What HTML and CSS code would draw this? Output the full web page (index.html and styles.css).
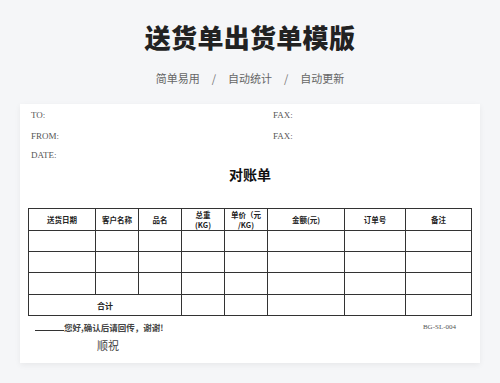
FILE: index.html
```html
<!DOCTYPE html>
<html lang="zh">
<head>
<meta charset="utf-8">
<link rel="stylesheet" href="styles.css">
</head>
<body>
<header class="hero">
  <h1 class="title">送货单出货单模版</h1>
  <p class="subtitle"><span>简单易用</span><span class="sep">/</span><span>自动统计</span><span class="sep">/</span><span>自动更新</span></p>
</header>
<main class="paper">
  <div class="meta">
    <div class="meta-row"><span>TO:</span><span>FAX:</span></div>
    <div class="meta-row"><span>FROM:</span><span>FAX:</span></div>
    <div class="meta-row"><span>DATE:</span><span></span></div>
  </div>
  <h2 class="doc-title">对账单</h2>
  <table class="grid">
    <colgroup>
      <col class="c1"><col class="c2"><col class="c3"><col class="c4"><col class="c5"><col class="c6"><col class="c7"><col class="c8">
    </colgroup>
    <thead>
      <tr class="head">
        <th>送货日期</th><th>客户名称</th><th>品名</th><th><span class="ln">总重</span><span class="ln">(KG)</span></th><th><span class="ln">单价（元</span><span class="ln">/KG)</span></th><th>金额(元)</th><th>订单号</th><th>备注</th>
      </tr>
    </thead>
    <tbody>
      <tr class="r1"><td></td><td></td><td></td><td></td><td></td><td></td><td></td><td></td></tr>
      <tr class="r2"><td></td><td></td><td></td><td></td><td></td><td></td><td></td><td></td></tr>
      <tr class="r3"><td></td><td></td><td></td><td></td><td></td><td></td><td></td><td></td></tr>
      <tr class="r4"><td colspan="3" class="sum">合计</td><td></td><td></td><td></td><td></td><td></td></tr>
    </tbody>
  </table>
  <div class="foot">
    <span class="note"><span class="blank"></span>您好,确认后请回传，谢谢!</span>
    <span class="code">BG-SL-004</span>
  </div>
  <div class="regards">顺祝</div>
</main>
</body>
</html>
```

FILE: styles.css
```css
* { box-sizing: border-box; }
html, body { margin: 0; padding: 0; }
body {
  width: 500px;
  height: 383px;
  background: #f5f6f8;
  overflow: hidden;
  font-family: "Liberation Serif", "Noto Sans CJK SC", serif;
}
.hero {
  text-align: center;
  padding-top: 23px;
}
.title {
  margin: 0;
  font-family: "Noto Sans CJK SC", sans-serif;
  font-weight: 900;
  font-size: 26px;
  line-height: 28px;
  color: #222;
  letter-spacing: 0.3px;
}
.subtitle {
  margin: 19px 0 0;
  font-family: "Noto Sans CJK SC", sans-serif;
  font-size: 11px;
  line-height: 16px;
  color: #666;
  display: flex;
  justify-content: center;
}
.sep { margin: 0 12px; color: #777; }
.paper {
  margin: 18px 0 0 20px;
  width: 460px;
  height: 259px;
  background: #fff;
  box-shadow: 0 2px 6px rgba(0,0,0,0.06);
  padding-top: 1px;
}
.meta { padding-left: 11px; }
.meta-row {
  display: grid;
  grid-template-columns: 242px auto;
  font-size: 9px;
  line-height: 12px;
  color: #555;
  height: 20px;
  align-items: center;
}
.meta-row:nth-child(2) { height: 21px; }
.meta-row:nth-child(3) { height: 18px; }
.doc-title {
  margin: 1px 0 0;
  text-align: center;
  font-family: "Noto Sans CJK SC", sans-serif;
  font-size: 14px;
  font-weight: 700;
  line-height: 18px;
  color: #111;
}
.grid {
  margin: 25px 0 0 8px;
  border-collapse: collapse;
  table-layout: fixed;
  width: 443px;
  font-size: 8px;
  color: #222;
}
.c1 { width: 67px; } .c2 { width: 43px; } .c3 { width: 43px; } .c4 { width: 43px; }
.c5 { width: 43px; } .c6 { width: 77px; } .c7 { width: 61px; } .c8 { width: 66px; }
.grid th, .grid td {
  border: 1px solid #333;
  padding: 0;
  text-align: center;
  vertical-align: middle;
}
.grid th {
  font-weight: 700;
  line-height: 10px;
  font-family: "Noto Sans CJK SC", sans-serif;
  font-size: 7.5px;
}
.ln { display: block; line-height: 10px; }
.head { height: 22px; }
.r1, .r2 { height: 21px; }
.r3 { height: 22px; }
.r4 { height: 21px; }
.sum {
  font-family: "Noto Sans CJK SC", sans-serif;
  font-weight: 700;
  font-size: 8px;
}
.foot {
  display: flex;
  justify-content: space-between;
  align-items: center;
  margin-top: 4px;
  padding: 0 24px 0 15px;
  height: 14px;
  font-size: 9px;
  color: #333;
}
.note {
  display: flex;
  align-items: flex-end;
  font-family: "Noto Sans CJK SC", sans-serif;
  font-size: 8.5px;
  font-weight: 700;
  color: #444;
}
.blank {
  display: inline-block;
  width: 29px;
  border-bottom: 1px solid #333;
  height: 8px;
  margin-bottom: 2px;
}
.code { font-size: 7px; color: #555; }
.regards {
  margin: 4px 0 0 77px;
  font-family: "Noto Sans CJK SC", sans-serif;
  font-size: 11px;
  line-height: 14px;
  color: #444;
}
```
